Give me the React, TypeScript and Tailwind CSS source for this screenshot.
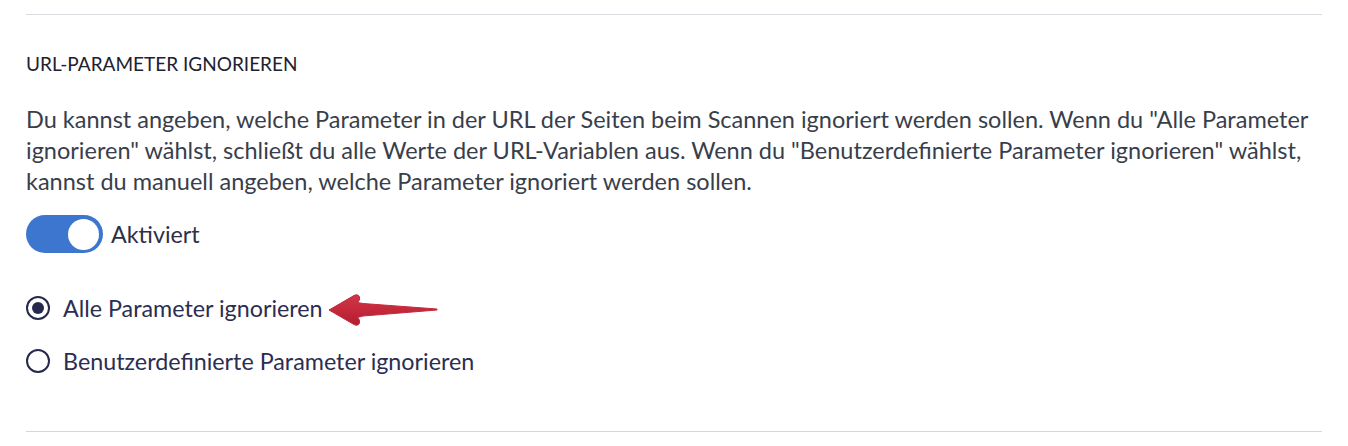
import React from 'react';

const font = { fontFamily: 'Lato, "Noto Sans", sans-serif' };

const Arrow: React.FC = () => (
  <svg width="114" height="34" viewBox="0 0 114 34" className="absolute left-[299px] top-[-1px]">
    <defs>
      <linearGradient id="ar" x1="0" y1="0" x2="0" y2="1">
        <stop offset="0" stopColor="#d23548" />
        <stop offset="1" stopColor="#b51c2f" />
      </linearGradient>
    </defs>
    <path
      d="M4 17 L29 2.5 Q33 0.5 34.5 4 Q35.5 7 32.5 9.5 L38 10.5 L112 16 L112 17 L38 23 L32.5 24.5 Q35.5 27 34.5 30 Q33 33.5 29 31.5 Z"
      fill="url(#ar)"
      stroke="#c42a3d"
      strokeWidth="1"
      strokeLinejoin="round"
    />
  </svg>
);

const Radio: React.FC<{ checked?: boolean; label: string; children?: React.ReactNode }> = ({ checked, label, children }) => (
  <label className="relative flex h-[28px] items-center gap-[13px]">
    <span className="flex h-[24px] w-[24px] items-center justify-center rounded-full border-[2.5px] border-[#26294d]">
      {checked && <span className="h-[12px] w-[12px] rounded-full bg-[#26294d]" />}
    </span>
    <span className="text-[23.3px] leading-[28px] text-[#2b2e52]">{label}</span>
    {children}
  </label>
);

export default function App() {
  return (
    <div className="min-h-[446px] w-full bg-white px-[26px] pt-[14px]" style={font}>
      <div className="w-[1296px] border-t border-[#dcdde3]">
        <h2 className="mt-[39px] text-[19px] font-normal uppercase leading-[20px] text-[#1e2130]">
          URL-Parameter ignorieren
        </h2>
        <p className="mt-[30px] text-[23.5px] leading-[31px] text-[#383e4b]">
          Du kannst angeben, welche Parameter in der URL der Seiten beim Scannen ignoriert werden sollen. Wenn du "Alle Parameter
          ignorieren" wählst, schließt du alle Werte der URL-Variablen aus. Wenn du "Benutzerdefinierte Parameter ignorieren" wählst,
          kannst du manuell angeben, welche Parameter ignoriert werden sollen.
        </p>
        <div className="mt-[18px] flex items-center gap-[8px]">
          <span className="flex h-[38px] w-[77px] items-center justify-end rounded-full bg-[#3c76cf] px-[4px]">
            <span className="h-[31px] w-[31px] rounded-full bg-white" />
          </span>
          <span className="text-[23.3px] leading-[28px] text-[#2d3047]">Aktiviert</span>
        </div>
        <div className="mt-[41px] flex flex-col gap-[25px]">
          <Radio checked label="Alle Parameter ignorieren">
            <Arrow />
          </Radio>
          <Radio label="Benutzerdefinierte Parameter ignorieren" />
        </div>
        <div className="mt-[56px] border-t border-[#d6d6d8]" />
      </div>
    </div>
  );
}
